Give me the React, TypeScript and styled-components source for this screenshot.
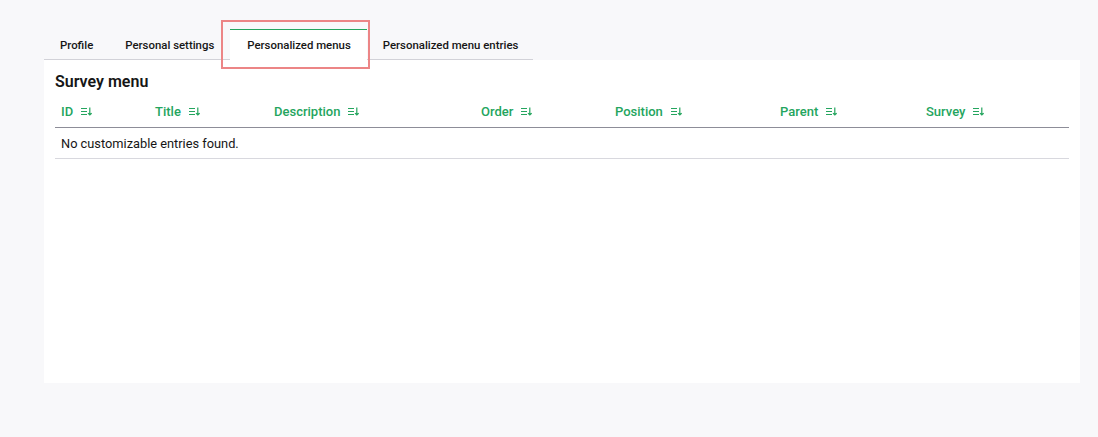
import React, { useState } from "react";
import styled, { createGlobalStyle } from "styled-components";

const TABS = ["Profile", "Personal settings", "Personalized menus", "Personalized menu entries"];

const COLUMNS = [
    { label: "ID", width: 94 },
    { label: "Title", width: 119 },
    { label: "Description", width: 207 },
    { label: "Order", width: 134 },
    { label: "Position", width: 165 },
    { label: "Parent", width: 146 },
    { label: "Survey", width: 149 },
];

const SortIcon = () => (
    <svg width="11" height="9" viewBox="0 0 11 9" fill="none">
        <path d="M0 1.5h6M0 4.5h6M0 7.5h6" stroke="currentColor" strokeWidth="1.2" />
        <path d="M8.8 0.5v7.5M7 6.2L8.8 8l1.8-1.8" stroke="currentColor" strokeWidth="1.2" />
    </svg>
);

const App: React.FunctionComponent = () => {
    const [activeTab, setActiveTab] = useState(2);

    return (
        <>
            <GlobalStyle />
            <Page>
                <TabBar>
                    {TABS.map((tab, i) => (
                        <Tab key={tab} active={activeTab === i} onClick={() => setActiveTab(i)}>
                            {tab}
                            {activeTab === i && <Highlight />}
                        </Tab>
                    ))}
                </TabBar>
                <Panel>
                    <Title>Survey menu</Title>
                    <Table>
                        <colgroup>
                            {COLUMNS.map((col) => (
                                <col key={col.label} style={{ width: col.width }} />
                            ))}
                        </colgroup>
                        <thead>
                            <tr>
                                {COLUMNS.map((col) => (
                                    <HeadCell key={col.label}>
                                        <HeadLabel>
                                            {col.label}
                                            <SortIcon />
                                        </HeadLabel>
                                    </HeadCell>
                                ))}
                            </tr>
                        </thead>
                        <tbody>
                            <tr>
                                <EmptyCell colSpan={COLUMNS.length}>No customizable entries found.</EmptyCell>
                            </tr>
                        </tbody>
                    </Table>
                </Panel>
            </Page>
        </>
    );
};

const GlobalStyle = createGlobalStyle`
    html, body {
        margin: 0;
        padding: 0;
        background: #f8f8fa;
        font-family: Roboto, "Liberation Sans", sans-serif;
        color: #161616;
    }
`;

const Page = styled.div`
    width: 1098px;
    height: 437px;
    padding: 29px 18px 0 44px;
    box-sizing: border-box;
`;

const TabBar = styled.div`
    display: flex;
    width: 489px;
    border-bottom: 1px solid #d2d2d8;
    height: 30px;
`;

const Tab = styled.div<{ active: boolean }>`
    position: relative;
    padding: 0 16px 0 16px;
    display: flex;
    align-items: center;
    font-size: 11.4px;
    font-weight: 500;
    color: #161616;
    cursor: pointer;
    white-space: nowrap;
    background: ${(p) => (p.active ? "#ffffff" : "transparent")};
    border-top: 1px solid ${(p) => (p.active ? "#24a55e" : "transparent")};
    margin-bottom: ${(p) => (p.active ? "-1px" : "0")};
    padding-left: ${(p) => (p.active ? "17px" : "16px")};
`;

const Highlight = styled.span`
    position: absolute;
    left: -9px;
    right: -3px;
    top: -10px;
    bottom: -9px;
    border: 2px solid #ec8586;
    pointer-events: none;
`;

const Panel = styled.div`
    background: #ffffff;
    height: 323px;
    padding: 12px 11px 0 11px;
    box-sizing: border-box;
`;

const Title = styled.h2`
    margin: 0 0 2px 0;
    font-size: 16px;
    font-weight: 600;
    line-height: 20px;
    color: #161616;
`;

const Table = styled.table`
    width: 1014px;
    border-collapse: collapse;
    table-layout: fixed;
`;

const HeadCell = styled.th`
    text-align: left;
    padding: 0 6px;
    height: 33px;
    border-bottom: 1px solid #8d8d98;
    vertical-align: middle;
`;

const HeadLabel = styled.span`
    display: inline-flex;
    align-items: center;
    gap: 8px;
    font-size: 13px;
    font-weight: 500;
    color: #24a55e;
`;

const EmptyCell = styled.td`
    padding: 0 6px;
    height: 30px;
    font-size: 12.8px;
    color: #161616;
    border-bottom: 1px solid #d8d8de;
`;

export default App;
